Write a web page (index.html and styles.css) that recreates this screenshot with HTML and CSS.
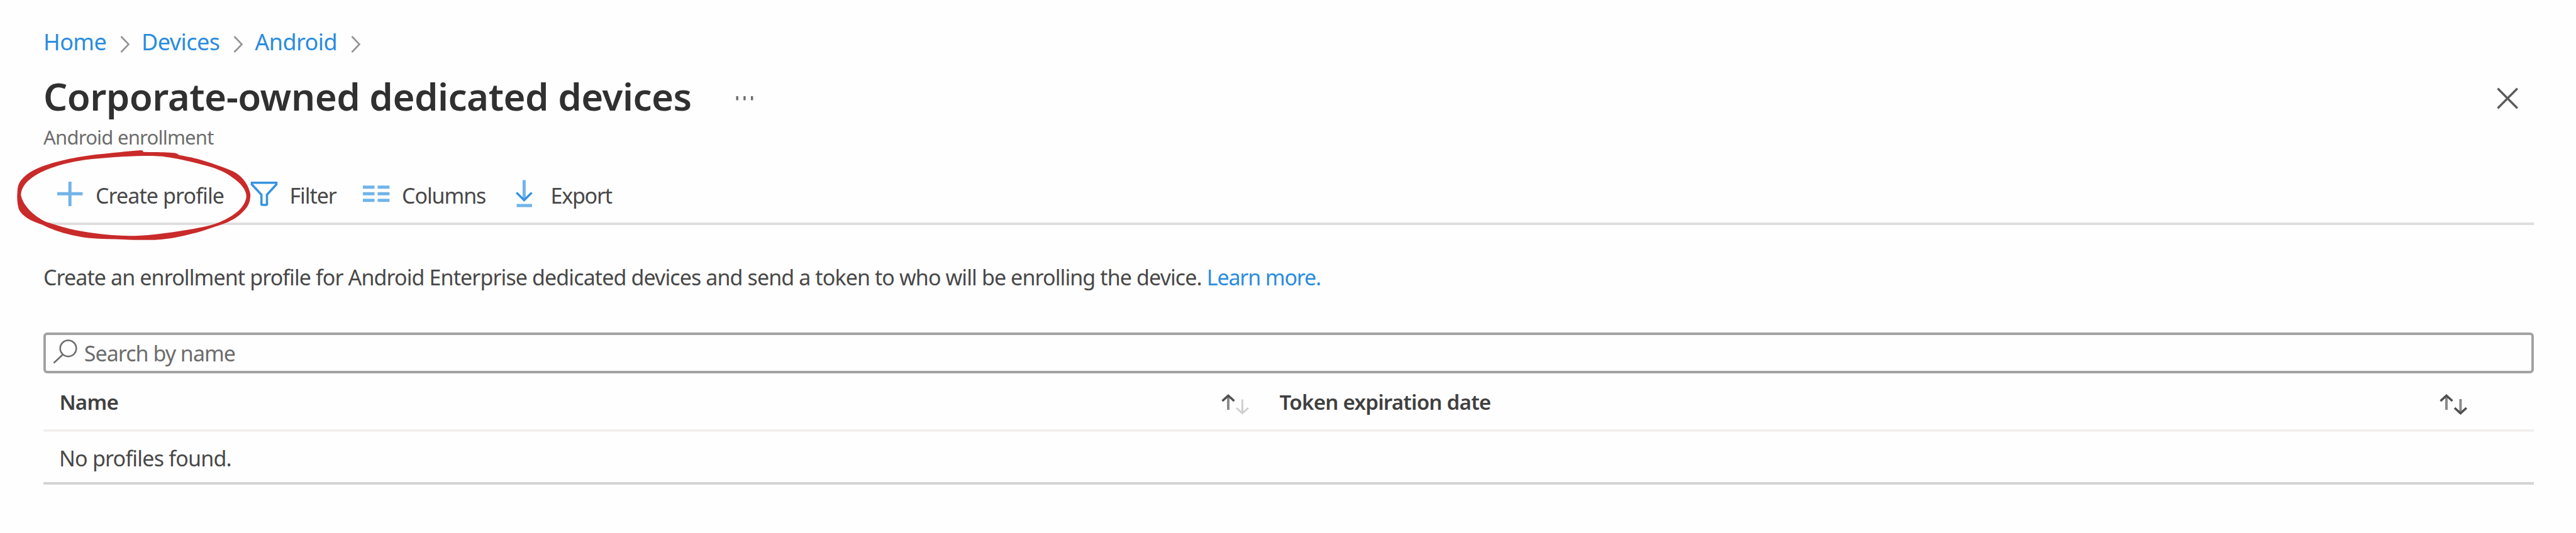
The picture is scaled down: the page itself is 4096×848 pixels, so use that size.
FILE: index.html
```html
<!DOCTYPE html>
<html lang="en">
<head>
<meta charset="utf-8">
<title>Corporate-owned dedicated devices</title>
<link rel="stylesheet" href="styles.css">
</head>
<body>
<main class="blade">
  <nav class="breadcrumb">
    <a class="link">Home</a>
    <svg class="chevron" viewBox="0 0 16 27"><path d="M1.5 1 13.5 13.5 1.5 26"/></svg>
    <a class="link">Devices</a>
    <svg class="chevron" viewBox="0 0 16 27"><path d="M1.5 1 13.5 13.5 1.5 26"/></svg>
    <a class="link">Android</a>
    <svg class="chevron" viewBox="0 0 16 27"><path d="M1.5 1 13.5 13.5 1.5 26"/></svg>
  </nav>

  <header class="title-row">
    <h1 class="title">Corporate-owned dedicated devices</h1>
    <svg class="more" viewBox="1168 113 32 80"><path d="M1170.5 153h3.4v6.4h-3.4zM1182.2 153h3.4v6.4h-3.4zM1194 153h3.4v6.4h-3.4z"/></svg>
    <svg class="close" viewBox="3969 113 36 80"><path d="M3971.5 140.700 4002.8 172.200M4002.8 140.700 3971.5 172.200"/></svg>
  </header>
  <p class="subtitle">Android enrollment</p>

  <div class="toolbar">
    <div class="tool create">
      <svg class="tool-icon" viewBox="90 288.500 42 44" width="42"><path class="light" d="M91 307.700H131.400M111.200 288.500V327.500"/></svg>
      <span>Create profile</span>
    </div>
    <div class="tool filter">
      <svg class="tool-icon" viewBox="398 288.500 44 44" width="44"><path class="strong" d="M400.500 290.300H439.400V293L424.500 309.300V324Q424.500 325.500 423 325.500H417.200Q415.700 325.500 415.700 324V309.300L400.500 293Z"/></svg>
      <span>Filter</span>
    </div>
    <div class="tool columns">
      <svg class="tool-icon" viewBox="576 288.500 44 44" width="44"><path class="light" d="M577 297.300h18.500M600.500 297.300h18.800M577 307.800h18.500M600.500 307.800h18.800M577 318.300h18.500M600.500 318.300h18.800"/></svg>
      <span>Columns</span>
    </div>
    <div class="tool export">
      <svg class="tool-icon" viewBox="819 286 30 49" width="30" height="49"><path class="light" d="M833.400 286.500V318M821.500 327H846"/><path class="strong" d="M821.300 306.500 833.400 318.500 845.500 306.500"/></svg>
      <span>Export</span>
    </div>
    <svg class="marker" viewBox="0 0 1568 600" preserveAspectRatio="none">
      <path fill-rule="evenodd" d="M628 48C560 54 500 62 430 70C330 84 220 110 150 150C105 178 80 210 78 250C75 290 76 320 84 350C98 388 140 412 190 430C240 460 320 488 400 498C450 503 500 503 550 505C600 508 640 508 690 507C750 504 790 494 850 477C890 466 925 452 960 438C1010 422 1050 400 1080 365C1108 335 1114 310 1115 275C1108 230 1085 190 1050 164C1020 144 960 122 900 100C870 88 830 80 797 73C790 64 780 62 765 61C730 57 680 59 638 57Q636 48 628 48Z
      M640 77C560 79 460 86 380 97C290 112 210 140 160 175C125 200 96 230 93 275C100 330 150 385 205 415C270 440 340 462 420 473C480 482 540 488 600 486C680 484 750 470 820 458C880 448 930 437 970 420C1030 390 1090 350 1097 285C1097 250 1070 215 1035 188C1010 165 970 145 935 133C870 112 800 92 735 82C710 78 690 78 665 77Z"/>
    </svg>
  </div>

  <p class="description">Create an enrollment profile for Android Enterprise dedicated devices and send a token to who will be enrolling the device. <a class="link learn">Learn more.</a></p>

  <div class="search">
    <svg class="search-icon" viewBox="82 537 42 48"><ellipse cx="108.500" cy="553.300" rx="12.800" ry="12.800"/><path d="M100 563 85.500 576.500"/></svg>
    <span>Search by name</span>
  </div>

  <section class="table">
    <div class="table-head">
      <div class="cell name-cell">
        <span>Name</span>
        <svg class="sort" viewBox="0 0 44 34"><path class="on" d="M11 26V4"/><path class="tip" d="M1.500 12 11 3.500 20.500 12"/><path class="off" d="M33.400 9.500V31M24 23 33.400 31.500 42.800 23"/></svg>
      </div>
      <div class="cell date-cell">
        <span>Token expiration date</span>
        <svg class="sort" viewBox="0 0 44 34"><path class="on" d="M11 26V4M33.400 9V31"/><path class="tip" d="M1.500 12 11 3.500 20.500 12M24 23 33.400 31.500 42.800 23"/></svg>
      </div>
    </div>
    <div class="table-row">No profiles found.</div>
  </section>
</main>
</body>
</html>
```

FILE: styles.css
```css
* { box-sizing: border-box; }

body {
  margin: 0;
  background: #fefefe;
  color: #484848;
  font-family: "Noto Sans", "Open Sans", sans-serif;
  font-size: 34px;
  line-height: 44px;
  letter-spacing: -0.9px;
}

h1, p { margin: 0; }
svg { display: block; flex: none; fill: none; }

.blade {
  width: 4096px;
  height: 848px;
  padding: 42px 67px 0 69px;
  overflow: hidden;
}

.link { color: #2a8ce0; text-decoration: none; }

.breadcrumb {
  display: flex;
  align-items: center;
  height: 50px;
  font-size: 36px;
  line-height: 50px;
  letter-spacing: -0.55px;
}
.chevron {
  width: 16px;
  height: 27px;
  margin: 6px 18.3px 0 21.5px;
  stroke: #939393;
  stroke-width: 2.6;
}

.title-row {
  display: flex;
  height: 80px;
  margin-top: 21px;
}
.title {
  color: #303030;
  font-size: 60px;
  font-weight: 600;
  line-height: 80px;
  letter-spacing: -0.52px;
}
.more { width: 32px; height: 80px; margin-left: 68.5px; fill: #6b6b6b; }
.close {
  width: 36px;
  height: 80px;
  margin: 0 24px 0 auto;
  stroke: #5a5a5a;
  stroke-width: 3.4;
}

.subtitle {
  margin-top: 4px;
  color: #6c6c6c;
  font-size: 31px;
  line-height: 42px;
  letter-spacing: -0.77px;
}

.toolbar {
  position: relative;
  display: flex;
  align-items: center;
  height: 119px;
  padding-top: 28px;
  border-bottom: 4px solid #dedede;
}
.tool { display: flex; align-items: center; }
.tool-icon { overflow: visible; }
.tool-icon .light { stroke: #70b4e9; stroke-width: 5; }
.tool-icon .strong { stroke: #3794e0; stroke-width: 3.6; }
.create { gap: 20px; margin-left: 21px; }
.filter { gap: 18.4px; margin-left: 42px; letter-spacing: -1.05px; }
.columns { gap: 19px; margin-left: 41.2px; letter-spacing: -1.1px; }
.export { gap: 26.5px; margin-left: 46.8px; letter-spacing: -1.25px; }

/* hand-drawn ring laid over the Create profile button */
.marker {
  position: absolute;
  left: -69px;
  top: -15px;
  width: 560px;
  height: 186.6px;
  fill: #c92a2a;
}

.description { margin-top: 61px; }
.learn { letter-spacing: -1.15px; }

.search {
  display: flex;
  align-items: center;
  gap: 9.8px;
  width: 3960px;
  height: 65px;
  margin-top: 66px;
  padding-left: 9px;
  border: 4px solid #a3a1a1;
  border-radius: 6px;
  color: #6c6c6c;
  letter-spacing: -0.98px;
}
.search-icon { width: 42px; height: 48px; stroke: #6e6e6e; stroke-width: 2.6; }

.table { width: 3960px; }
.table-head {
  display: grid;
  grid-template-columns: 1941px 1fr;
  height: 93px;
  border-bottom: 4px solid #f1f0ef;
  color: #404040;
  font-size: 33px;
  font-weight: 600;
  letter-spacing: -0.7px;
}
.cell {
  display: flex;
  align-items: center;
  justify-content: space-between;
  padding-top: 3px;
}
.name-cell { padding-left: 25.4px; padding-right: 24px; }
.date-cell { padding-left: 24.5px; padding-right: 106px; }
.sort { width: 44px; height: 34px; margin-top: 5px; }
.sort .on { stroke: #8a8a8a; stroke-width: 4; }
.sort .tip { stroke: #4e4e4e; stroke-width: 3.6; }
.sort .off { stroke: #cfcfcf; stroke-width: 3; }

.table-row {
  display: flex;
  align-items: center;
  height: 84px;
  padding: 3px 0 0 25px;
  border-bottom: 4px solid #d4d4d4;
  letter-spacing: -0.78px;
}
```
